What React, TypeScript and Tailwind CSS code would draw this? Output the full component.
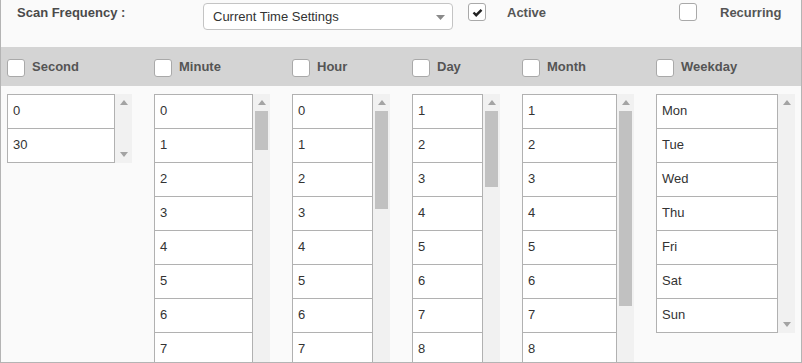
import React from "react";

type Col = {
  label: string;
  width: string;
  items: string[];
  thumb?: number;
  full: boolean;
};

const minutes = Array.from({ length: 8 }, (_, i) => String(i));
const cols: Col[] = [
  { label: "Second", width: "w-[125px]", items: ["0", "30"], full: false },
  { label: "Minute", width: "w-[116px]", items: minutes, thumb: 39, full: true },
  { label: "Hour", width: "w-[98px]", items: minutes, thumb: 98, full: true },
  { label: "Day", width: "w-[88px]", items: ["1", "2", "3", "4", "5", "6", "7", "8"], thumb: 76, full: true },
  { label: "Month", width: "w-[112px]", items: ["1", "2", "3", "4", "5", "6", "7", "8"], thumb: 195, full: true },
  { label: "Weekday", width: "w-[139px]", items: ["Mon", "Tue", "Wed", "Thu", "Fri", "Sat", "Sun"], full: false },
];

function Box({ checked = false }: { checked?: boolean }) {
  return (
    <div className="w-[18px] h-[18px] shrink-0 bg-white border border-[#a9a9a9] rounded-[3px] flex items-center justify-center">
      {checked && (
        <svg width="11" height="9" viewBox="0 0 11 9">
          <path d="M1.5 4.5 L4.2 7.2 L9.5 1.8" fill="none" stroke="#222" strokeWidth="2.4" />
        </svg>
      )}
    </div>
  );
}

function UpArrow() {
  return (
    <svg width="8" height="5" viewBox="0 0 8 5">
      <path d="M0 5 L4 0 L8 5 Z" fill="#a3a3a3" />
    </svg>
  );
}
function DownArrow() {
  return (
    <svg width="8" height="5" viewBox="0 0 8 5">
      <path d="M0 0 L4 5 L8 0 Z" fill="#a3a3a3" />
    </svg>
  );
}

function List({ col }: { col: Col }) {
  return (
    <div className={`${col.width} flex items-start`}>
      <div className="flex-1 border-t border-l border-r border-[#b1b1b1] bg-white">
        {col.items.map((it) => (
          <div
            key={it}
            className="h-[34px] border-b border-[#b1b1b1] pl-[5px] pb-[1px] flex items-center text-[13px] text-[#333]"
          >
            {it}
          </div>
        ))}
      </div>
      <div
        className={`w-[17px] bg-[#f1f1f1] flex flex-col items-center ${col.full ? "h-[300px]" : "self-stretch"}`}
      >
        <div className="h-[17px] flex items-center justify-center w-full">
          <UpArrow />
        </div>
        {col.thumb !== undefined && (
          <div className="w-[13px] bg-[#c1c1c1]" style={{ height: col.thumb }} />
        )}
        {!col.full && (
          <div className="mt-auto h-[17px] flex items-center justify-center w-full">
            <DownArrow />
          </div>
        )}
      </div>
    </div>
  );
}

export default function App() {
  return (
    <div
      className="w-[802px] h-[363px] overflow-hidden border-l border-r border-b border-[#b4b4b4] bg-[#fafafa]"
      style={{ fontFamily: '"Liberation Sans", Arial, sans-serif' }}
    >
      <div className="h-[47px] flex items-start">
        <div className="w-[202px] pl-[16px] pt-[5px] text-[13px] leading-[16px] font-bold text-[#4a4a4a]">
          Scan Frequency :
        </div>
        <div className="mt-[3px] w-[250px] h-[27px] bg-white border border-[#c4c4c4] rounded-[4px] flex items-center pl-[9px] pr-[7px] text-[13px] text-[#333]">
          <span className="flex-1">Current Time Settings</span>
          <svg width="9" height="5" viewBox="0 0 9 5" className="mt-[1px]">
            <path d="M0 0 L4.5 5 L9 0 Z" fill="#8a8a8a" />
          </svg>
        </div>
        <div className="ml-[15px] mt-[3px]">
          <Box checked />
        </div>
        <div className="w-[193px] pl-[21px] pt-[5px] text-[13px] leading-[16px] font-bold text-[#555]">
          Active
        </div>
        <div className="mt-[3px]">
          <Box />
        </div>
        <div className="pl-[23px] pt-[5px] text-[13px] leading-[16px] font-bold text-[#555]">
          Recurring
        </div>
      </div>

      <div className="h-[39px] bg-[#d4d4d4] pl-[6px] pt-[12px] flex gap-[22px]">
        {cols.map((c) => (
          <div key={c.label} className={`${c.width} flex items-start gap-[7px]`}>
            <Box />
            <span className="text-[13px] leading-[16px] font-bold text-[#555]">{c.label}</span>
          </div>
        ))}
      </div>

      <div className="pl-[6px] pt-[8px] flex gap-[22px] items-start">
        {cols.map((c) => (
          <List key={c.label} col={c} />
        ))}
      </div>
    </div>
  );
}
